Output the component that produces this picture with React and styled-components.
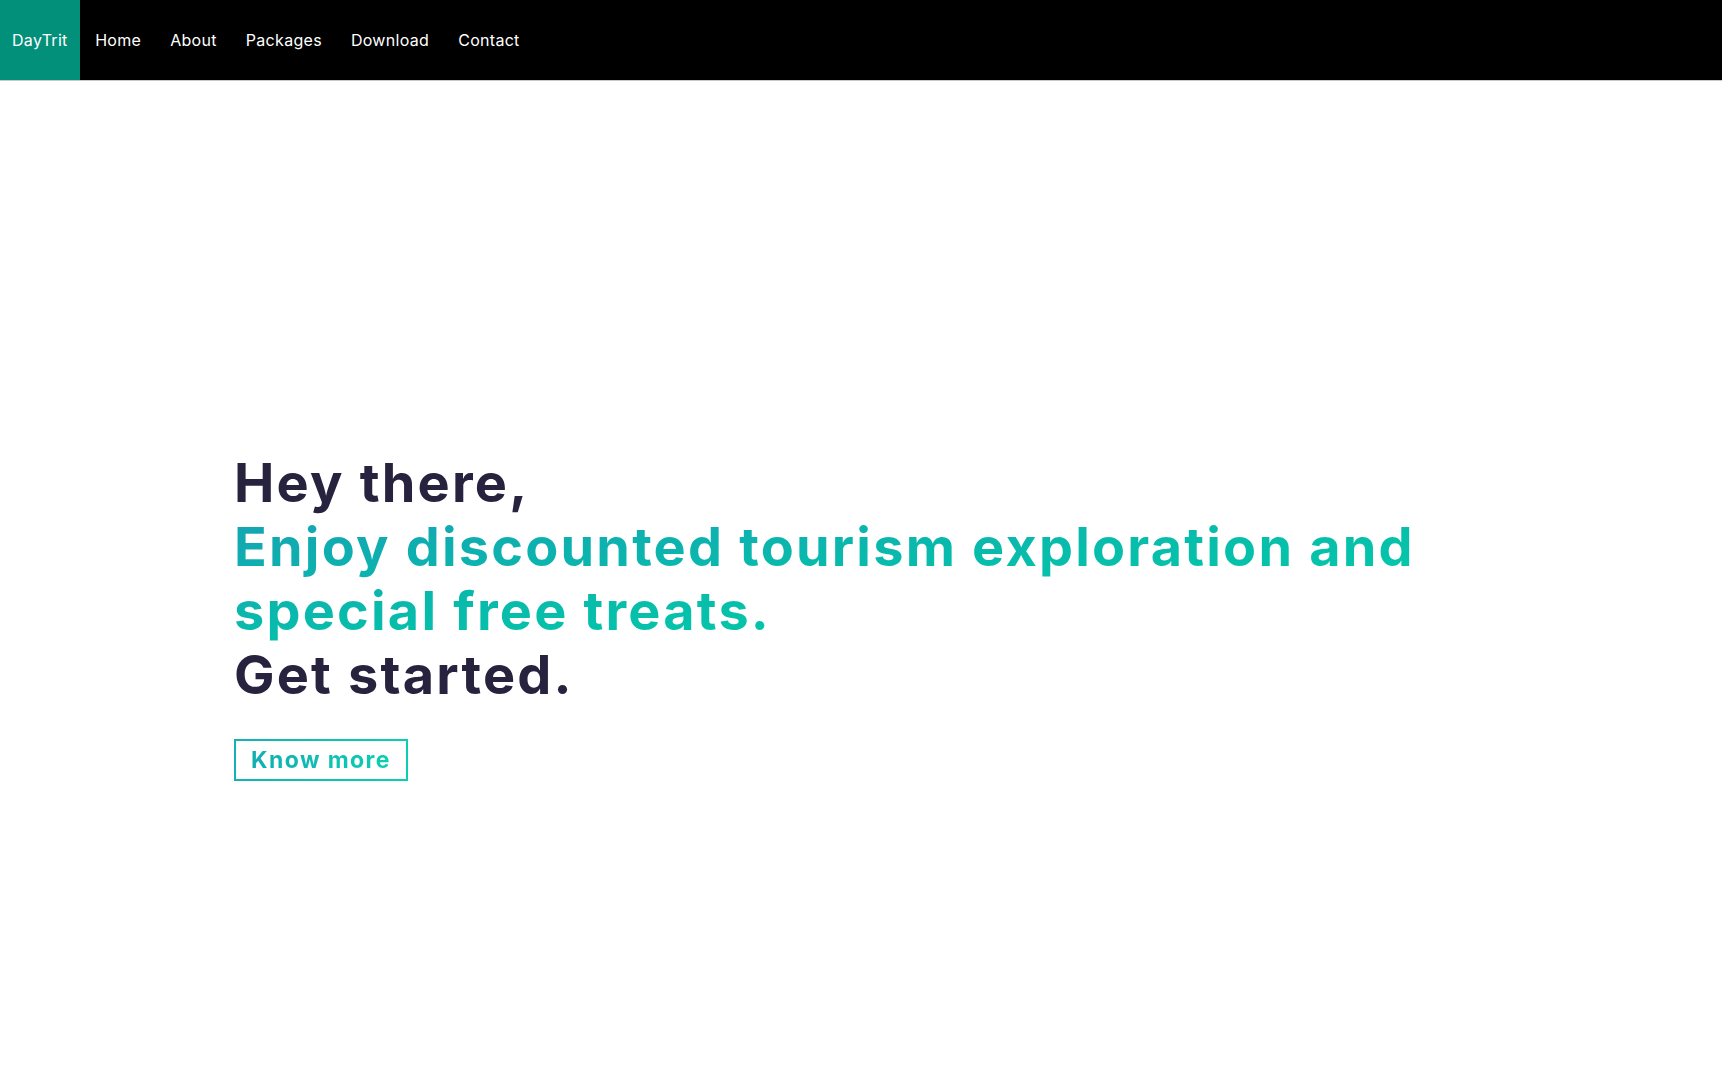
import React from "react";
import styled, { createGlobalStyle } from "styled-components";

const Global = createGlobalStyle`
  * { box-sizing: border-box; }
  html, body { margin: 0; padding: 0; background: #fff; }
  body { font-family: "Inter", "Open Sans", sans-serif; }
`;

const Nav = styled.nav`
  display: flex;
  align-items: stretch;
  height: 80px;
  background: #000;
  box-shadow: 0 1px 0 #c8c8c8;
`;

const NavItem = styled.a`
  display: flex;
  align-items: center;
  padding: 0 ${(p) => (p.$brand ? "12px" : "14.5px")};
  margin-left: ${(p) => (p.$first ? "1px" : "0")};
  background: ${(p) => (p.$brand ? "#03907a" : "transparent")};
  color: #fff;
  font-size: 16px;
  text-decoration: none;
  letter-spacing: 0.3px;
  cursor: pointer;
  padding-bottom: 1px;
`;

const Hero = styled.section`
  padding: 371px 0 0 234px;
`;

const Heading = styled.h1`
  margin: 0;
  font-family: "Inter", sans-serif;
  font-weight: 700;
  font-size: 54px;
  line-height: 64px;
  color: #27233f;
  letter-spacing: 2.2px;
`;

const Accent = styled.span`
  display: inline-block;
  background: linear-gradient(to bottom right, #14a4b3 0%, #07bdab 50%, #00d2a7 100%);
  -webkit-background-clip: text;
  background-clip: text;
  color: transparent;
`;

const Button = styled.button`
  display: block;
  margin-top: 32px;
  width: 174px;
  height: 42px;
  padding: 0;
  border: 2px solid transparent;
  border-image: linear-gradient(90deg, #11b2b4, #0ccfb0) 1;
  background: #fff;
  font-family: "Inter", sans-serif;
  font-weight: 700;
  font-size: 23px;
  letter-spacing: 1.4px;
  cursor: pointer;
`;

const ButtonText = styled.span`
  background: linear-gradient(90deg, #12aeb2, #0ccfb0);
  -webkit-background-clip: text;
  background-clip: text;
  color: transparent;
`;

export default function App() {
  return (
    <>
      <Global />
      <Nav>
        <NavItem $brand>DayTrit</NavItem>
        <NavItem $first>Home</NavItem>
        <NavItem>About</NavItem>
        <NavItem>Packages</NavItem>
        <NavItem>Download</NavItem>
        <NavItem>Contact</NavItem>
      </Nav>
      <Hero>
        <Heading>
          Hey there,
          <br />
          <Accent>
            Enjoy discounted tourism exploration and
            <br />
            special free treats.
          </Accent>
          <br />
          Get started.
        </Heading>
        <Button>
          <ButtonText>Know more</ButtonText>
        </Button>
      </Hero>
    </>
  );
}
